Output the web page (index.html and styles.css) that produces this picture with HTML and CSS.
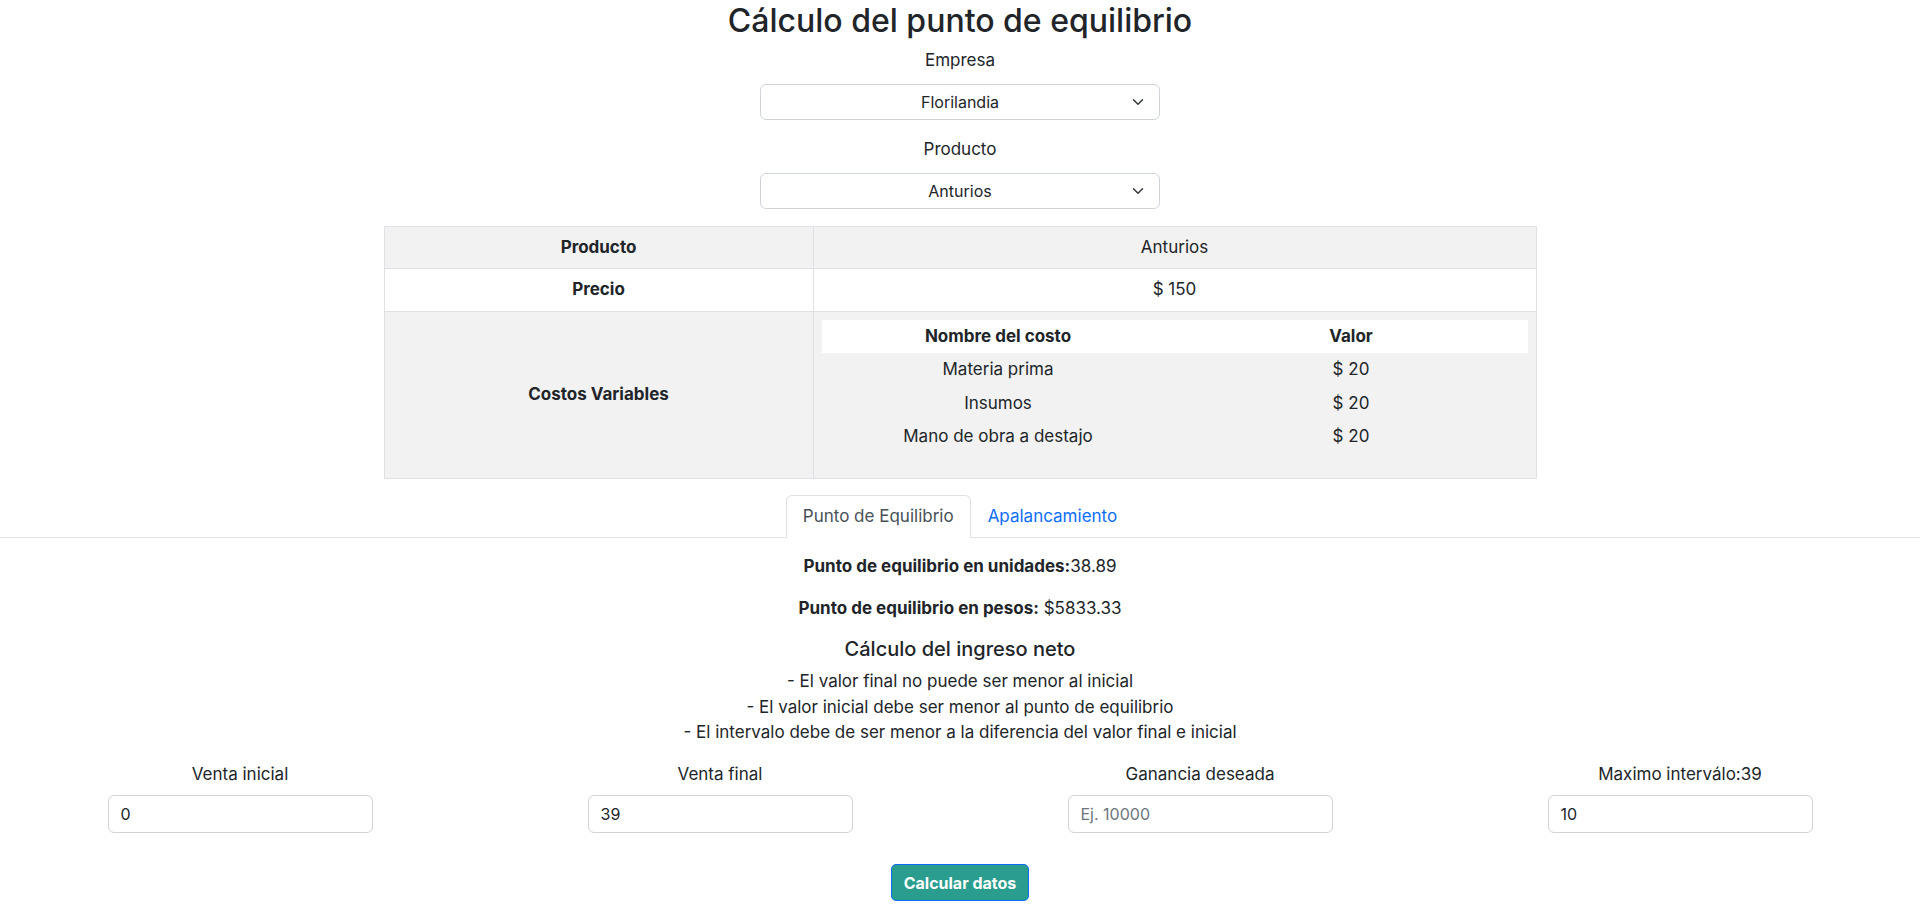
FILE: index.html
```html
<!DOCTYPE html>
<html lang="es">
<head>
<meta charset="utf-8">
<title>Cálculo del punto de equilibrio</title>
<link rel="stylesheet" href="styles.css">
</head>
<body>
<main class="page">
  <h1 class="title">Cálculo del punto de equilibrio</h1>

  <div class="field">
    <label class="field-label" for="empresa">Empresa</label>
    <div class="select-wrap">
      <select id="empresa" class="select"><option>Florilandia</option></select>
      <svg class="chev" width="12" height="12" viewBox="0 0 16 16"><path d="M2 5l6 6 6-6" fill="none" stroke="#343a40" stroke-width="2" stroke-linecap="round" stroke-linejoin="round"/></svg>
    </div>
  </div>

  <div class="field">
    <label class="field-label" for="producto">Producto</label>
    <div class="select-wrap">
      <select id="producto" class="select"><option>Anturios</option></select>
      <svg class="chev" width="12" height="12" viewBox="0 0 16 16"><path d="M2 5l6 6 6-6" fill="none" stroke="#343a40" stroke-width="2" stroke-linecap="round" stroke-linejoin="round"/></svg>
    </div>
  </div>

  <table class="info">
    <colgroup><col class="info-c1"><col class="info-c2"></colgroup>
    <tbody>
      <tr class="striped"><th>Producto</th><td>Anturios</td></tr>
      <tr><th>Precio</th><td>$ 150</td></tr>
      <tr class="striped">
        <th>Costos Variables</th>
        <td class="nested-cell">
          <table class="costs">
            <thead><tr><th>Nombre del costo</th><th>Valor</th></tr></thead>
            <tbody>
              <tr><td>Materia prima</td><td>$ 20</td></tr>
              <tr><td>Insumos</td><td>$ 20</td></tr>
              <tr><td>Mano de obra a destajo</td><td>$ 20</td></tr>
            </tbody>
          </table>
        </td>
      </tr>
    </tbody>
  </table>

  <ul class="tabs">
    <li class="tab-item"><a class="tab-link active" href="#">Punto de Equilibrio</a></li>
    <li class="tab-item"><a class="tab-link" href="#">Apalancamiento</a></li>
  </ul>

  <section class="tab-content">
    <p class="result"><strong>Punto de equilibrio en unidades:</strong>38.89</p>
    <p class="result"><strong>Punto de equilibrio en pesos:</strong> $5833.33</p>
    <h2 class="sub">Cálculo del ingreso neto</h2>
    <div class="rules">
      <div>- El valor final no puede ser menor al inicial</div>
      <div>- El valor inicial debe ser menor al punto de equilibrio</div>
      <div>- El intervalo debe de ser menor a la diferencia del valor final e inicial</div>
    </div>

    <div class="inputs-row">
      <div class="col">
        <label class="col-label" for="vi">Venta inicial</label>
        <input id="vi" class="input" type="text" value="0">
      </div>
      <div class="col">
        <label class="col-label" for="vf">Venta final</label>
        <input id="vf" class="input" type="text" value="39">
      </div>
      <div class="col">
        <label class="col-label" for="gd">Ganancia deseada</label>
        <input id="gd" class="input" type="text" placeholder="Ej. 10000">
      </div>
      <div class="col">
        <label class="col-label" for="mi">Maximo interválo:39</label>
        <input id="mi" class="input" type="text" value="10">
      </div>
    </div>

    <div class="actions">
      <button class="btn" type="button">Calcular datos</button>
    </div>
  </section>
</main>
</body>
</html>
```
FILE: styles.css
```css
* { box-sizing: border-box; }

html, body {
  margin: 0;
  padding: 0;
  background: #fff;
}

body {
  font-family: Inter, "Noto Sans", sans-serif;
  font-size: 17px;
  line-height: 1.5;
  color: #212529;
}

.page {
  text-align: center;
}

.title {
  font-size: 32px;
  font-weight: 500;
  line-height: 1.2;
  margin: 1.6px 0 7.8px;
}

.field-label {
  display: block;
  margin-bottom: 11px;
}

.select-wrap {
  position: relative;
  width: 400px;
  margin: 0 auto 17px;
}

.select {
  display: block;
  width: 100%;
  height: 35.5px;
  padding: 0 36px;
  border: 1px solid #ced4da;
  border-radius: 6px;
  background: #fff;
  font-family: inherit;
  font-size: 16px;
  color: #212529;
  text-align: center;
  text-align-last: center;
  -webkit-appearance: none;
  appearance: none;
}

.chev {
  position: absolute;
  right: 16px;
  top: 50%;
  margin-top: -6px;
  pointer-events: none;
}

/* info table */
.info {
  width: 1152px;
  margin: 0 auto 16px;
  border-collapse: collapse;
  table-layout: fixed;
}

.info-c1 { width: 429px; }
.info-c2 { width: 723px; }

.info > tbody > tr > th,
.info > tbody > tr > td {
  border: 1px solid #dee2e6;
  padding: 8px;
  text-align: center;
  vertical-align: middle;
  font-weight: 400;
}

.info > tbody > tr > th {
  font-weight: 700;
}

.info > tbody > tr.striped > th,
.info > tbody > tr.striped > td {
  background: #f2f2f2;
}

.costs {
  width: 100%;
  border-collapse: collapse;
  table-layout: fixed;
  margin-bottom: 16px;
}

.costs th,
.costs td {
  border: 0;
  padding: 4px;
  text-align: center;
}

.costs thead tr {
  background: #fff;
}

.costs th {
  font-weight: 700;
}

/* tabs */
.tabs {
  list-style: none;
  margin: 3px 0 0;
  padding: 0;
  display: flex;
  justify-content: center;
  border-bottom: 1px solid #dee2e6;
}

.tab-item {
  margin-bottom: -1px;
}

.tab-link {
  display: block;
  padding: 8px 16px;
  border: 1px solid transparent;
  border-top-left-radius: 6px;
  border-top-right-radius: 6px;
  color: #0d6efd;
  text-decoration: none;
}

.tab-link.active {
  color: #495057;
  background: #fff;
  border-color: #dee2e6 #dee2e6 #fff;
}

.tab-content {
  padding-top: 16px;
}

.result {
  margin: 0 0 16px;
}

.result strong {
  font-weight: 700;
}

.sub {
  font-size: 20px;
  font-weight: 500;
  line-height: 1.2;
  margin: 0 0 8px;
}

.inputs-row {
  display: grid;
  grid-template-columns: repeat(4, 1fr);
  margin-top: 16px;
}

.col {
  text-align: center;
}

.col-label {
  display: block;
  margin-bottom: 7.5px;
}

.input {
  display: block;
  width: 265px;
  height: 38px;
  margin: 0 auto;
  padding: 0 12px;
  border: 1px solid #ced4da;
  border-radius: 6px;
  font-family: inherit;
  font-size: 16px;
  color: #212529;
  background: #fff;
}

.input::placeholder {
  color: #6c757d;
}

.actions {
  margin-top: 31.5px;
}

.btn {
  display: inline-flex;
  align-items: center;
  justify-content: center;
  height: 37px;
  padding: 0 12px;
  background: #2a9d8f;
  border: 1px solid #0d6efd;
  border-radius: 5px;
  color: #fff;
  font-family: inherit;
  font-size: 16px;
  font-weight: 700;
  cursor: pointer;
}
```
